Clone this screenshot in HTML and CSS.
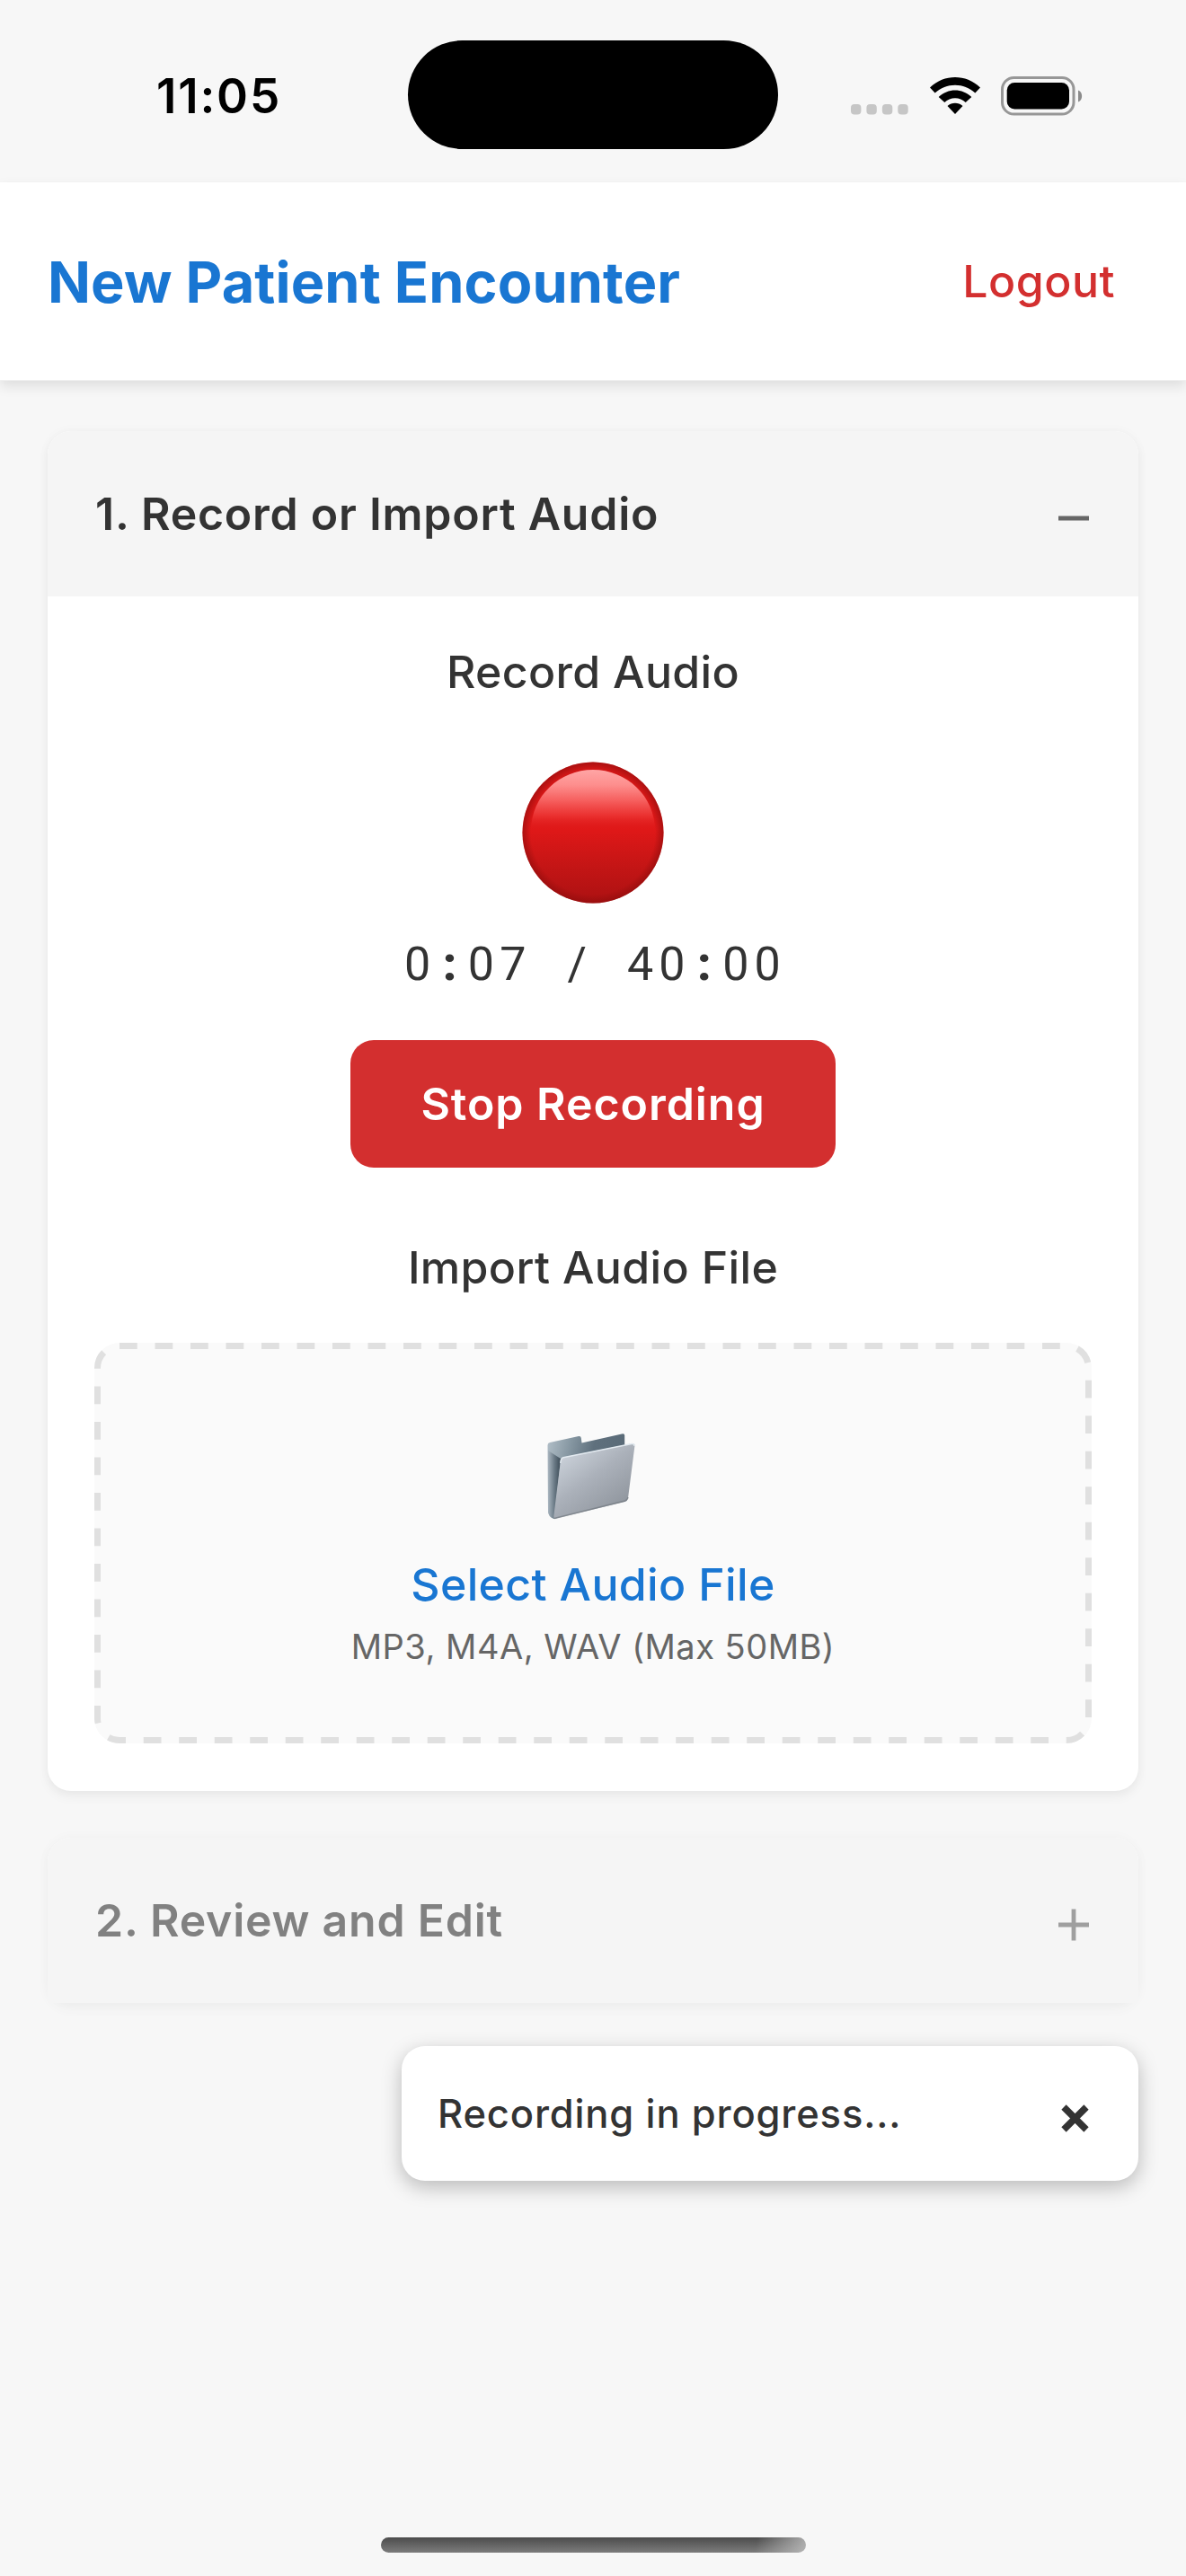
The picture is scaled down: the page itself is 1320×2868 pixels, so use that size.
FILE: index.html
```html
<!DOCTYPE html>
<html lang="en">
<head>
<meta charset="utf-8">
<title>New Patient Encounter</title>
<link rel="stylesheet" href="styles.css">
</head>
<body>
<div class="screen">
  <div class="status-bar">
    <div class="status-time">11:05</div>
    <div class="island"></div>
    <div class="status-icons">
      <svg class="cell-dots" width="64" height="12" viewBox="0 0 64 12" fill="#c6c6c6"><rect width="11.4" height="11.4" rx="4"/><rect x="17.4" width="11.4" height="11.4" rx="4"/><rect x="34.9" width="11.4" height="11.4" rx="4"/><rect x="52.3" width="11.4" height="11.4" rx="4"/></svg>
      <svg class="wifi" width="56" height="42" viewBox="0 0 56 42"><path d="M0 11.5C16-3.8 40-3.8 56 11.5L50.3 17.5C38 5.8 18 5.8 5.7 17.5ZM9.7 22C20 12 36 12 46.3 22L39.7 28C33.5 21.7 22.500 21.7 16.300 28ZM19.500 32C24.500 27.700 31.500 27.700 36.500 32L28 41Z"/></svg>
      <svg class="battery" width="92" height="44" viewBox="0 0 92 44"><rect x="1.500" y="1.500" width="79.500" height="40.500" rx="13" fill="none" stroke="#979797" stroke-width="3"/><rect x="6.700" y="7" width="69.300" height="29.600" rx="8.500"/><path d="M86 15.500C91.500 17.500 91.500 26.500 86 28.500Z" fill="#8b8b8b"/></svg>
    </div>
  </div>
  <header class="app-header">
    <h1 class="title">New Patient Encounter</h1>
    <a class="logout">Logout</a>
  </header>
  <main class="content">
    <section class="card">
      <div class="card-head">
        <h2 class="card-title">1. Record or Import Audio</h2>
        <svg class="toggle" width="34" height="36" viewBox="0 0 34 36"><path d="M0 18H34" stroke="#666" stroke-width="4.800"/></svg>
      </div>
      <div class="card-body">
        <h3 class="label record-label">Record Audio</h3>
        <svg class="record-dot" width="158" height="158" viewBox="0 0 158 158">
          <defs>
            <linearGradient id="ball" x1="0" y1="0" x2="0" y2="1"><stop offset="0" stop-color="#d91818"/><stop offset=".48" stop-color="#df1818"/><stop offset=".75" stop-color="#c31515"/><stop offset="1" stop-color="#ac1112"/></linearGradient>
            <radialGradient id="rim"><stop offset=".88" stop-color="#900c0c" stop-opacity="0"/><stop offset="1" stop-color="#900c0c" stop-opacity=".65"/></radialGradient>
            <linearGradient id="shine" x1="0" y1="0" x2="0" y2="1"><stop offset="0" stop-color="#ffa5a5"/><stop offset=".25" stop-color="#fd8e8d"/><stop offset=".5" stop-color="#f6605f"/><stop offset=".75" stop-color="#ec3433" stop-opacity=".9"/><stop offset="1" stop-color="#df1818" stop-opacity="0"/></linearGradient>
          </defs>
          <circle cx="79" cy="79" r="78.500" fill="url(#ball)"/>
          <circle cx="79" cy="79" r="78.500" fill="url(#rim)"/>
          <path d="M10 77C10 38 42 9 79 9S148 38 148 77Z" fill="url(#shine)"/>
        </svg>
        <div class="timer">0<span class="colon">:</span>07<span class="slash"> / </span>40<span class="colon">:</span>00</div>
        <button class="stop">Stop Recording</button>
        <h3 class="label import-label">Import Audio File</h3>
        <div class="dropzone">
          <svg class="dashes" width="1110" height="446" viewBox="0 0 1110 446"><rect x="3.500" y="3.500" width="1103" height="439" rx="24.500" fill="#fafafa" stroke="#e0e0e0" stroke-width="7" stroke-dasharray="19.750 19.750"/></svg>
          <svg class="folder" width="98" height="97" viewBox="0 0 98 97">
            <defs>
              <linearGradient id="back" x1="0" y1="0" x2="1" y2=".25"><stop offset="0" stop-color="#b3c0c9"/><stop offset=".3" stop-color="#8798a3"/><stop offset=".6" stop-color="#5f707d"/><stop offset="1" stop-color="#596a77"/></linearGradient>
              <linearGradient id="spine" x1="0" y1="0" x2="1" y2="0"><stop offset="0" stop-color="#a9b5bf"/><stop offset=".5" stop-color="#6a7a86"/><stop offset="1" stop-color="#3b4a56"/></linearGradient>
              <linearGradient id="front" x1="0" y1="0" x2=".8" y2="1"><stop offset="0" stop-color="#d7dee6"/><stop offset=".5" stop-color="#abb1ba"/><stop offset="1" stop-color="#8b9199"/></linearGradient>
            </defs>
            <path d="M.500 14Q.500 11.500 3 11L35 4Q37.500 3.500 37.800 6L38.500 11.500L83 1.500Q86 .500 86.200 3V70L8 96Q1 94 1 87Z" fill="url(#back)"/>
            <path d="M1 20L15 29L8 96Q2 95 1 87Z" fill="url(#spine)"/>
            <path d="M15 31Q15 28.500 18 27.500L94 12.300Q98 11.500 97.400 15L90 73Q89.500 76 86.500 77L10 95.500Q7 96.500 7.300 93Z" fill="url(#front)"/>
            <path d="M14.800 34Q15 28.500 18 27.800L94 12.600Q97 12 97 15" fill="none" stroke="#e3eaf0" stroke-width="1.500"/>
            <path d="M8 95.500L86.500 76Q89.500 75 90 72" fill="none" stroke="#747a82" stroke-width="1.500" opacity=".7"/>
          </svg>
          <div class="select-link">Select Audio File</div>
          <div class="hint">MP3, M4A, WAV (Max 50MB)</div>
        </div>
      </div>
    </section>
    <section class="card disabled">
      <div class="card-head">
        <h2 class="card-title">2. Review and Edit</h2>
        <svg class="toggle" width="34" height="36" viewBox="0 0 34 36"><path d="M0 18H34M17 .500V35.500" stroke="#666" stroke-width="4.800"/></svg>
      </div>
    </section>
  </main>
  <div class="toast" role="status">
    <div class="toast-text">Recording in progress...</div>
    <svg class="close" width="31" height="31" viewBox="0 0 31 31"><path d="M3 3L28 28M28 3L3 28" stroke="#333" stroke-width="7.500"/></svg>
  </div>
  <div class="home-indicator"></div>
</div>
</body>
</html>
```
FILE: styles.css
```css
* { box-sizing: border-box; }
body { margin: 0; background: #f7f7f7; font-family: Inter, "Liberation Sans", sans-serif; color: #333; }
h1, h2, h3 { margin: 0; }
svg { display: block; flex: none; }
.screen { position: relative; width: 1320px; height: 2868px; overflow: hidden; white-space: nowrap; }
.status-bar { height: 203px; display: flex; align-items: flex-start; }
.status-time { width: 454px; padding: 77px 0 0 174px; font-size: 53px; line-height: 60px; font-weight: 600; letter-spacing: 1.8px; color: #000; }
.island { width: 412px; height: 121px; margin-top: 45px; border-radius: 61px; background: #000; }
.status-icons { display: flex; padding: 85px 0 0 81px; }
.cell-dots { margin: 31px 24px 0 0; }
.wifi { margin: 1px 23px 0 0; }
.app-header { height: 221px; padding: 0 79px 0 53px; display: flex; align-items: center; justify-content: space-between; background: #fff; box-shadow: 0 6px 13px rgba(0, 0, 0, .1); border-bottom: 1px solid #f0f0f0; }
.title { font-size: 63px; line-height: 80px; font-weight: 700; letter-spacing: .1px; color: #1976d2; padding-top: 1px; }
.logout { font-size: 50px; font-weight: 500; letter-spacing: .5px; color: #d32f2f; }
.content { padding: 56px 53px 0; display: flex; flex-direction: column; gap: 52px; }
.card { background: #fff; border-radius: 26px; box-shadow: 0 6px 13px rgba(0, 0, 0, .05), 0 0 13px rgba(0, 0, 0, .03); }
.card-head { height: 184px; padding: 0 55px 0 53px; display: flex; align-items: center; justify-content: space-between; background: #f5f5f5; border-radius: 26px 26px 0 0; }
.card-title { font-size: 50px; font-weight: 600; letter-spacing: .75px; }
.toggle { margin-top: 10px; }
.card-body { padding: 54px 52px 53px; display: flex; flex-direction: column; align-items: center; }
.label { font-size: 50px; line-height: 60px; font-weight: 500; letter-spacing: .35px; }
.record-dot { margin-top: 70px; }
.timer { margin-top: 38px; padding-left: 5px; font-family: Roboto, sans-serif; font-size: 52px; line-height: 60px; font-weight: 400; letter-spacing: 6.2px; }
.colon, .slash { display: inline-block; width: 35.4px; text-align: center; letter-spacing: 0; text-indent: -5px; }
.colon { font-weight: 900; }
.slash { width: 106.2px; white-space: pre; }
.stop { width: 540px; height: 142px; margin-top: 54px; padding: 0; border: 0; border-radius: 26px; background: #d32f2f; color: #fff; font: 600 50px/60px Inter, "Liberation Sans", sans-serif; letter-spacing: .95px; }
.import-label { margin-top: 81px; }
.dropzone { position: relative; width: 1110px; height: 446px; margin-top: 54px; padding-top: 100px; display: flex; flex-direction: column; align-items: center; border-radius: 28px; background: #fafafa; }
.dashes { position: absolute; inset: 0; }
.folder { position: relative; margin-right: 5px; }
.select-link { position: relative; margin-top: 42px; font-size: 50px; line-height: 60px; font-weight: 500; letter-spacing: .35px; color: #1976d2; }
.hint { position: relative; margin-top: 16px; font-size: 38px; line-height: 46px; letter-spacing: .5px; color: #666; }
.disabled { opacity: .6; }
.toast { position: absolute; left: 447px; top: 2278px; width: 820px; height: 150px; padding: 0 55px 0 40px; display: flex; align-items: center; justify-content: space-between; border-radius: 26px; background: #fff; box-shadow: 0 7px 22px rgba(0, 0, 0, .25); }
.toast-text { font-size: 43.5px; font-weight: 500; letter-spacing: .85px; }
.close { margin-top: 10px; }
.home-indicator { position: absolute; left: 424px; top: 2825px; width: 473px; height: 17px; border-radius: 9px; background: linear-gradient(100deg, transparent 88%, rgba(190, 190, 190, .85) 100%), linear-gradient(#4c4c4c, #7c7c7c); }
```
